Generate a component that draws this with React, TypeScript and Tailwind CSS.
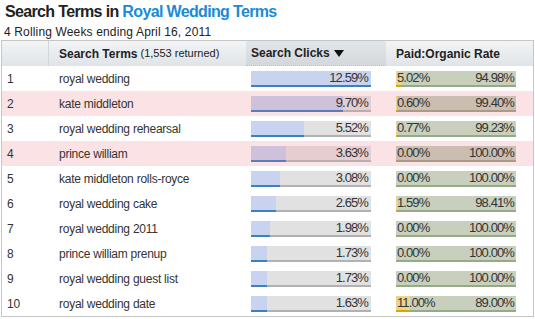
import React from "react";

type Row = { rank: number; term: string; clicks: number; paid: number; organic: number; hot?: boolean };

const rows: Row[] = [
  { rank: 1, term: "royal wedding", clicks: 12.59, paid: 5.02, organic: 94.98 },
  { rank: 2, term: "kate middleton", clicks: 9.7, paid: 0.6, organic: 99.4, hot: true },
  { rank: 3, term: "royal wedding rehearsal", clicks: 5.52, paid: 0.77, organic: 99.23 },
  { rank: 4, term: "prince william", clicks: 3.63, paid: 0.0, organic: 100.0, hot: true },
  { rank: 5, term: "kate middleton rolls-royce", clicks: 3.08, paid: 0.0, organic: 100.0 },
  { rank: 6, term: "royal wedding cake", clicks: 2.65, paid: 1.59, organic: 98.41 },
  { rank: 7, term: "royal wedding 2011", clicks: 1.98, paid: 0.0, organic: 100.0 },
  { rank: 8, term: "prince william prenup", clicks: 1.73, paid: 0.0, organic: 100.0 },
  { rank: 9, term: "royal wedding guest list", clicks: 1.73, paid: 0.0, organic: 100.0 },
  { rank: 10, term: "royal wedding date", clicks: 1.63, paid: 11.0, organic: 89.0 },
];

const MAX_CLICKS = 12.59;

function ClicksBar({ value, hot }: { value: number; hot?: boolean }) {
  const w = Math.round((value / MAX_CLICKS) * 120);
  return (
    <div className="relative w-[120px] h-4">
      <div className={hot ? "absolute inset-x-0 top-0 h-[14px] bg-[#e5cdd0]" : "absolute inset-x-0 top-0 h-[14px] bg-[#e1e1e1]"} />
      <div className={hot ? "absolute inset-x-0 bottom-0 h-[2px] bg-[#b8aeb0]" : "absolute inset-x-0 bottom-0 h-[2px] bg-[#b2b0b2]"} />
      <div className="absolute left-0 top-0 h-4 flex flex-col" style={{ width: w }}>
        <div className={hot ? "h-[14px] bg-[#cfc0dc]" : "h-[14px] bg-[#c8d4ef]"} />
        <div className={hot ? "h-[2px] bg-[#5a7db8]" : "h-[2px] bg-[#3a80c3]"} />
      </div>
      <span className="absolute right-[3px] top-0 h-[14px] leading-[14px] text-[13px] tracking-[-0.9px] text-[#333]">
        {value.toFixed(2)}%
      </span>
    </div>
  );
}

function RateBar({ paid, organic, hot }: { paid: number; organic: number; hot?: boolean }) {
  const w = paid > 0 ? Math.max(1, Math.round(paid * 1.25)) : 0;
  return (
    <div className="relative w-[120px] h-4">
      <div className={hot ? "absolute inset-x-0 top-0 h-[14px] bg-[#cbbdb0]" : "absolute inset-x-0 top-0 h-[14px] bg-[#c8cfbd]"} />
      <div className={hot ? "absolute inset-x-0 bottom-0 h-[2px] bg-[#a89c86]" : "absolute inset-x-0 bottom-0 h-[2px] bg-[#95ab87]"} />
      {w > 0 && (
        <div className="absolute left-0 top-0 h-4 flex flex-col" style={{ width: w }}>
          <div className="h-[14px] bg-[#e9d68c]" />
          <div className="h-[2px] bg-[#d6aa00]" />
        </div>
      )}
      <div className="absolute inset-x-0 top-0 h-[14px] flex justify-between pl-px pr-[2px] leading-[14px] text-[13px] tracking-[-0.9px] text-[#333]">
        <span>{paid.toFixed(2)}%</span>
        <span>{organic.toFixed(2)}%</span>
      </div>
    </div>
  );
}

export default function App() {
  return (
    <div className="w-[535px] h-[319px] bg-white font-['Liberation_Sans',Arial,sans-serif] text-[#333] overflow-hidden">
      <div className="pl-[5px] pt-[2px] h-[22px] leading-5 text-[16px] font-bold tracking-[-0.65px] text-[#222]">
        Search Terms in <span className="text-[#1a8bd6]">Royal Wedding Terms</span>
      </div>
      <div className="pl-[4px] mt-[2px] h-4 leading-4 text-[12px] tracking-[0.15px] text-[#222]">4 Rolling Weeks ending April 16, 2011</div>

      <div className="ml-px w-[533px] border border-[#c6c6c6]">
        {/* header */}
        <div className="grid grid-cols-[47px_197px_140px_147px] h-[25px] text-[12px] text-[#222] bg-gradient-to-b from-[#f2f4f6] to-[#e0e4e7]">
          <div className="border-r border-[#d3d7db]" />
          <div className="flex items-center pl-[10px]">
            <span className="font-bold">Search Terms</span>
            <span className="ml-[3px] text-[11px]">(1,553 returned)</span>
          </div>
          <div className="flex items-center pl-[5px] font-bold bg-gradient-to-b from-[#e3e6e9] to-[#d3d8dc] border-b border-dotted border-[#b9bec3]">
            Search Clicks
            <svg width="10" height="7" viewBox="0 0 10 7" className="ml-[4px] mt-px">
              <path d="M0 0 H10 L5 7 Z" fill="#111" />
            </svg>
          </div>
          <div className="flex items-center pl-[10px] font-bold">Paid:Organic Rate</div>
        </div>

        {rows.map((r) => (
          <div
            key={r.rank}
            className={
              r.hot
                ? "grid grid-cols-[47px_197px_140px_147px] h-[25px] items-center text-[12px] tracking-[-0.25px] bg-[#fbe3e5]"
                : "grid grid-cols-[47px_197px_140px_147px] h-[25px] items-center text-[12px] tracking-[-0.25px] bg-white"
            }
          >
            <div className="pl-[5px]">{r.rank}</div>
            <div className="pl-[10px] whitespace-nowrap">{r.term}</div>
            <div className="pl-[5px]">
              <ClicksBar value={r.clicks} hot={r.hot} />
            </div>
            <div className="pl-[10px]">
              <RateBar paid={r.paid} organic={r.organic} hot={r.hot} />
            </div>
          </div>
        ))}
      </div>
    </div>
  );
}
